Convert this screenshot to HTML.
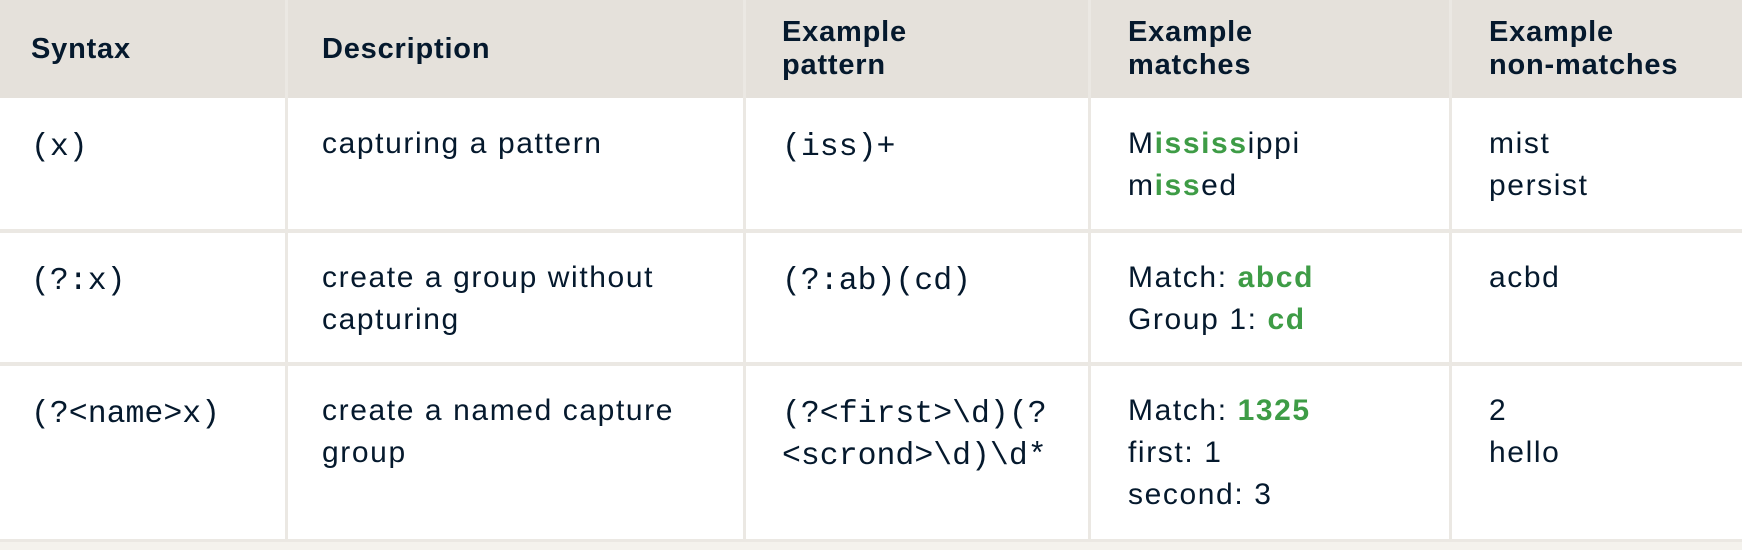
<!DOCTYPE html>
<html><head><meta charset="utf-8"><style>
*{margin:0;padding:0;box-sizing:border-box}
body{width:1742px;height:550px;background:#f4f2ed;position:relative;overflow:hidden;font-family:"Liberation Sans",sans-serif;color:#05192d}
.hdr{position:absolute;left:0;top:0;width:1742px;height:98px;background:#e5e1db}
.body{position:absolute;left:0;top:98px;width:1742px;height:443px;background:#fff}
.vl{position:absolute;top:0;width:3px;height:541px;background:#ebe8e3}
.hl{position:absolute;left:0;width:1742px;height:4px;background:#ebe8e3}
.t{position:absolute;font-size:30px;letter-spacing:1.6px;line-height:42px;white-space:nowrap}
.h{font-weight:bold;line-height:33px;font-size:29px;letter-spacing:0.8px}
.m{font-family:"Liberation Mono",monospace;font-size:31.5px;letter-spacing:0;margin-top:4px}
.g{color:#3e9c46;font-weight:bold}
</style></head><body>
<div class="hdr"></div>
<div class="body"></div>
<div class="hl" style="top:229px"></div>
<div class="hl" style="top:362px"></div>
<div class="hl" style="top:539px;height:3px"></div>
<div class="vl" style="left:285px"></div>
<div class="vl" style="left:743px"></div>
<div class="vl" style="left:1088px"></div>
<div class="vl" style="left:1449px"></div>

<div class="t h" style="left:31px;top:33px">Syntax</div>
<div class="t h" style="left:322px;top:33px">Description</div>
<div class="t h" style="left:782px;top:16px">Example<br>pattern</div>
<div class="t h" style="left:1128px;top:16px">Example<br>matches</div>
<div class="t h" style="left:1489px;top:16px">Example<br>non-matches</div>

<div class="t m" style="left:31px;top:123px">(x)</div>
<div class="t" style="left:322px;top:123px">capturing a pattern</div>
<div class="t m" style="left:782px;top:123px">(iss)+</div>
<div class="t" style="left:1128px;top:123px">M<span class="g">ississ</span>ippi<br>m<span class="g">iss</span>ed</div>
<div class="t" style="left:1489px;top:123px">mist<br>persist</div>

<div class="t m" style="left:31px;top:257px">(?:x)</div>
<div class="t" style="left:322px;top:257px">create a group without<br>capturing</div>
<div class="t m" style="left:782px;top:257px">(?:ab)(cd)</div>
<div class="t" style="left:1128px;top:257px">Match: <span class="g">abcd</span><br>Group 1: <span class="g">cd</span></div>
<div class="t" style="left:1489px;top:257px">acbd</div>

<div class="t m" style="left:31px;top:390px">(?&lt;name&gt;x)</div>
<div class="t" style="left:322px;top:390px">create a named capture<br>group</div>
<div class="t m" style="left:782px;top:390px">(?&lt;first&gt;\d)(?<br>&lt;scrond&gt;\d)\d*</div>
<div class="t" style="left:1128px;top:390px">Match: <span class="g">1325</span><br>first: 1<br>second: 3</div>
<div class="t" style="left:1489px;top:390px">2<br>hello</div>
</body></html>
